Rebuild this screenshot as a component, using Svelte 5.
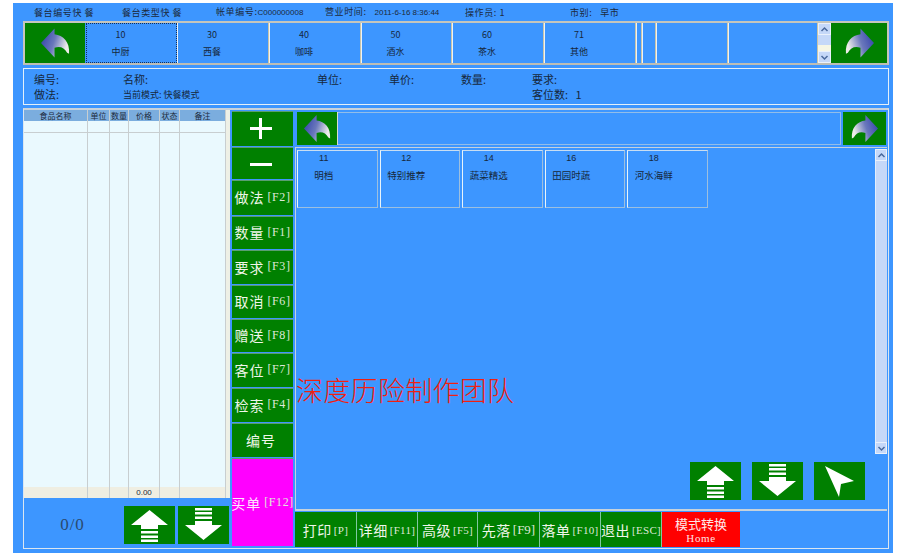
<script>
    const tabs = [
        { code: "10", name: "中厨", w: 91, focus: true },
        { code: "30", name: "西餐", w: 92 },
        { code: "40", name: "咖啡", w: 92 },
        { code: "50", name: "酒水", w: 91 },
        { code: "60", name: "茶水", w: 92 },
        { code: "71", name: "其他", w: 92 },
        { code: "", name: "", w: 6 },
        { code: "", name: "", w: 14 },
        { code: "", name: "", w: 72 },
        { code: "", name: "", w: 90 },
    ];
    const headers = [
        { t: "食品名称", w: 64 },
        { t: "单位", w: 22 },
        { t: "数量", w: 19 },
        { t: "价格", w: 31 },
        { t: "状态", w: 20 },
        { t: "备注", w: 46 },
    ];
    const cats = [
        { code: "11", name: "明档" },
        { code: "12", name: "特别推荐" },
        { code: "14", name: "蔬菜精选" },
        { code: "16", name: "田园时蔬" },
        { code: "18", name: "河水海鲜" },
    ];
    const side = [
        { t: "做法", k: "[F2]", h: 35 },
        { t: "数量", k: "[F1]", h: 33 },
        { t: "要求", k: "[F3]", h: 34 },
        { t: "取消", k: "[F6]", h: 33 },
        { t: "赠送", k: "[F8]", h: 33 },
        { t: "客位", k: "[F7]", h: 34 },
        { t: "检索", k: "[F4]", h: 34 },
        { t: "编号", k: "", h: 34 },
    ];
    const bottom = [
        { t: "打印", k: "[P]", w: 62 },
        { t: "详细", k: "[F11]", w: 61 },
        { t: "高级", k: "[F5]", w: 60 },
        { t: "先落", k: "[F9]", w: 62, big: true },
        { t: "落单", k: "[F10]", w: 61 },
        { t: "退出", k: "[ESC]", w: 61 },
    ];
</script>

{#snippet curved(cls)}
    <svg class={cls} viewBox="0 0 30 30">
        <defs>
            <linearGradient id="arrowfill" x1="0" y1="0" x2="1" y2="0.35">
                <stop offset="0" stop-color="#2a3aa6" />
                <stop offset="0.55" stop-color="#6a78bc" />
                <stop offset="1" stop-color="#ecece8" />
            </linearGradient>
        </defs>
        <path d="M0 15 L14 0 L14 6 C23 7 30 14 29 26 L27 25 C24 20 20 18 14 20 L14 30 Z" fill="url(#arrowfill)" />
    </svg>
{/snippet}

{#snippet chevron(up)}
    <div class="sb-btn">
        <svg viewBox="0 0 9 9" width="9" height="9">
            <path d={up ? "M1.500 6 L4.500 3 L7.500 6" : "M1.500 3 L4.500 6 L7.500 3"} fill="none" stroke="#4a6a9c" stroke-width="1.500" />
        </svg>
    </div>
{/snippet}

{#snippet upArrow()}
    <svg class="block" viewBox="0 0 51 38">
        <path d="M25.500 4 L44 19 L34 19 L34 23 L17 23 L17 19 L7 19 Z M17 25 H34 V27.500 H17 Z M17 29.500 H34 V32 H17 Z M17 33.500 H34 V36 H17 Z" fill="#fff" />
    </svg>
{/snippet}

{#snippet downArrow()}
    <svg class="block" viewBox="0 0 51 38">
        <path d="M25.500 34 L44 19 L34 19 L34 15 L17 15 L17 19 L7 19 Z M17 13 H34 V10.500 H17 Z M17 8.500 H34 V6 H17 Z M17 4.500 H34 V2 H17 Z" fill="#fff" />
    </svg>
{/snippet}

<div class="page">
    <div class="window">
        <div class="status">
            <span>餐台编号快 餐</span>
            <span>餐台类型快 餐</span>
            <span>帐单编号:<i>C000000008</i></span>
            <span class="open">营业时间:<i>2011-6-16 8:36:44</i></span>
            <span>操作员: 1</span>
            <span>市别: &nbsp;&nbsp;早市</span>
        </div>

        <div class="tabs">
            <button class="green nav-l">{@render curved("curve")}</button>
            {#each tabs as tab}
                <div class="tab" class:focus={tab.focus} class:labelled={tab.code} style="width:{tab.w}px">
                    <span>{tab.code}</span>
                    <span>{tab.name}</span>
                </div>
            {/each}
            <div class="tab-scroll">
                {@render chevron(true)}
                <div class="sb-thumb"></div>
                <div class="sb-track"></div>
                {@render chevron(false)}
            </div>
            <button class="green nav-r">{@render curved("curve flip")}</button>
        </div>

        <div class="info">
            <span>编号:</span><span>名称:</span><span>单位:</span><span>单价:</span><span>数量:</span><span>要求:</span>
            <span>做法:</span><span class="mode">当前模式: 快餐模式</span><span></span><span></span><span></span><span>客位数: &nbsp;&nbsp;1</span>
        </div>

        <div class="main">
            <div class="left">
                <div class="table">
                    <div class="row head">
                        {#each headers as h}<div style="width:{h.w}px">{h.t}</div>{/each}
                    </div>
                    <div class="row first">
                        {#each headers as h}<div style="width:{h.w}px"></div>{/each}
                    </div>
                    <div class="row fill">
                        {#each headers as h}<div style="width:{h.w}px"></div>{/each}
                    </div>
                    <div class="row total">
                        {#each headers as h, i}<div style="width:{h.w}px">{i === 3 ? "0.00" : ""}</div>{/each}
                    </div>
                </div>
                <div class="pager">
                    <span class="count">0/0</span>
                    <button class="green big">{@render upArrow()}</button>
                    <button class="green big">{@render downArrow()}</button>
                </div>
            </div>

            <div class="side">
                <button class="green sbtn plus"><span class="bar-h"></span><span class="bar-v"></span></button>
                <button class="green sbtn minus"><span class="bar-h"></span></button>
                {#each side as s}
                    <button class="green sbtn" style="height:{s.h}px">{s.t}<small>{s.k}</small></button>
                {/each}
                <button class="sbtn pay">买单<small>[F12]</small></button>
            </div>

            <div class="right">
                <div class="subnav">
                    <button class="green sub-l">{@render curved("curve small")}</button>
                    <div class="sub-fill"></div>
                    <button class="green sub-r">{@render curved("curve small flip")}</button>
                </div>
                <div class="board">
                    <div class="cells">
                        {#each cats as c}
                            <div class="cell">
                                <span class="code">{c.code}</span>
                                <span class="name">{c.name}</span>
                            </div>
                        {/each}
                    </div>
                    <div class="scroll">
                        {@render chevron(true)}
                        <div class="scroll-thumb"></div>
                        {@render chevron(false)}
                    </div>
                    <div class="actions">
                        <button class="green big">{@render upArrow()}</button>
                        <button class="green big">{@render downArrow()}</button>
                        <button class="green big">
                            <svg class="block" viewBox="0 0 51 38">
                                <path d="M11 4 L40 19 L27 22 L25 35 Z" fill="#fff" />
                            </svg>
                        </button>
                    </div>
                    <div class="watermark">深度历险制作团队</div>
                </div>
                <div class="bottom">
                    {#each bottom as b}
                        <button class="green bbtn" class:wide={b.big} style="width:{b.w}px">{b.t}<small>{b.k}</small></button>
                    {/each}
                    <button class="switch">模式转换<small>Home</small></button>
                </div>
            </div>
        </div>
    </div>
</div>

<style>
    :global(body) {
        margin: 0;
        background: #fff;
    }
    .page {
        width: 900px;
        height: 559px;
        padding: 3px 0 0 13px;
        box-sizing: border-box;
        font-family: "Noto Sans CJK SC", "Liberation Sans", sans-serif;
        color: #16283c;
    }
    .window {
        width: 880px;
        height: 550px;
        background: #3d96ff;
        box-sizing: border-box;
        padding-left: 10px;
        overflow: hidden;
    }
    button {
        border: 0;
        padding: 0;
        margin: 0;
        font: inherit;
    }
    .green {
        background: #008000;
    }
    .status {
        height: 18px;
        display: grid;
        grid-template-columns: 88px 94px 109px 140px 105px 1fr;
        padding-left: 11px;
        align-items: center;
        font-size: 9px;
        letter-spacing: 0.6px;
        line-height: 18px;
        white-space: nowrap;
        color: #1c2a3c;
    }
    .status i {
        font-style: normal;
        font-size: 8px;
        letter-spacing: 0;
        font-family: "Liberation Sans", sans-serif;
    }
    .open i {
        margin-left: 8px;
    }
    .tabs {
        width: 866px;
        height: 44px;
        display: flex;
        box-sizing: border-box;
        border: 2px solid #c6c6bc;
        border-bottom-color: #bdbdb4;
    }
    .nav-l {
        width: 60px;
        height: 40px;
        flex: none;
        margin-right: 1px;
        display: flex;
        align-items: center;
        justify-content: center;
    }
    .nav-r {
        width: 56px;
        height: 40px;
        flex: none;
        display: flex;
        align-items: center;
        justify-content: center;
    }
    .curve {
        width: 29px;
        height: 30px;
        display: block;
    }
    .flip {
        transform: scaleX(-1);
    }
    .small {
        width: 27px;
        height: 27px;
    }
    .tab {
        box-sizing: border-box;
        flex: none;
        height: 40px;
        border-left: 1px solid #eef3f6;
        border-right: 1px solid #c9c4a8;
        display: flex;
        flex-direction: column;
        align-items: center;
        justify-content: center;
        gap: 4px;
        font-size: 9px;
        line-height: 13px;
    }
    .labelled {
        padding-right: 22px;
    }
    .focus {
        border: 1px dotted #12305c;
    }
    .tab-scroll {
        width: 13px;
        height: 40px;
        flex: none;
        display: flex;
        flex-direction: column;
        background: #f6f6e4;
    }
    .sb-btn {
        height: 12px;
        flex: none;
        background: #c5d8f8;
        border: 1px solid #eaf1fb;
        box-sizing: border-box;
        display: flex;
        align-items: center;
        justify-content: center;
        overflow: hidden;
    }
    .sb-thumb {
        height: 10px;
        background: #c5d8f8;
    }
    .sb-track {
        flex: 1;
    }
    .info {
        width: 866px;
        height: 37px;
        margin-top: 3px;
        box-sizing: border-box;
        border: 1px solid #e4f0fa;
        display: grid;
        grid-template-columns: 89px 194px 72px 72px 71px 1fr;
        grid-template-rows: 15px 15px;
        padding: 3px 0 0 10px;
        font-size: 11px;
        line-height: 15px;
        white-space: nowrap;
    }
    .mode {
        font-size: 9px;
    }
    .main {
        width: 866px;
        height: 441px;
        margin-top: 3px;
        box-sizing: border-box;
        border: 1px solid #dbe6f0;
        border-top: 2px solid #c9d3dc;
        display: flex;
    }
    .left {
        width: 206px;
        display: flex;
        flex-direction: column;
    }
    .table {
        width: 206px;
        height: 388px;
        box-sizing: border-box;
        border-right: 4px solid #eef0e6;
        display: flex;
        flex-direction: column;
        background: #eaf9fe;
    }
    .row {
        display: flex;
        font-size: 8px;
        text-align: center;
        color: #1c2a3c;
    }
    .row div {
        box-sizing: border-box;
        border-right: 1px solid #c8ced0;
    }
    .head {
        height: 11px;
        line-height: 11px;
        background: #7badde;
        white-space: nowrap;
    }
    .first {
        height: 11px;
        border-bottom: 1px solid #c8ced0;
    }
    .fill {
        flex: 1;
    }
    .total {
        height: 11px;
        line-height: 11px;
        background: #efeee2;
        font-family: "Liberation Sans", sans-serif;
    }
    .pager {
        flex: 1;
        display: flex;
        align-items: center;
        gap: 3px;
        padding-top: 3px;
    }
    .count {
        width: 97px;
        text-align: center;
        font: 17px "Liberation Serif", serif;
        letter-spacing: 1px;
        color: #2a4a70;
    }
    .big {
        width: 51px;
        height: 38px;
        flex: none;
    }
    .block {
        display: block;
        width: 51px;
        height: 38px;
    }
    .side {
        width: 61px;
        margin: 1px 2px 0;
        display: flex;
        flex-direction: column;
        gap: 1px;
    }
    .sbtn {
        width: 61px;
        box-sizing: border-box;
        color: #f0f6ea;
        font-size: 14px;
        white-space: nowrap;
        letter-spacing: 1px;
        border-top: 1px solid #5a9e70;
        padding-bottom: 2px;
        overflow: hidden;
        display: flex;
        align-items: center;
        justify-content: center;
    }
    small {
        font: 12px "Liberation Serif", serif;
        letter-spacing: 0.6px;
        margin-left: 3px;
        color: #dfe8d8;
    }
    .plus {
        height: 35px;
        position: relative;
    }
    .minus {
        height: 32px;
        position: relative;
    }
    .bar-h {
        position: absolute;
        left: 18px;
        top: 15px;
        width: 22px;
        height: 3px;
        background: #fff;
    }
    .bar-v {
        position: absolute;
        left: 27px;
        top: 6px;
        width: 3px;
        height: 21px;
        background: #fff;
    }
    .pay {
        height: 88px;
        padding-bottom: 0;
        background: #ff00ff;
        color: #ffe6ff;
    }
    .right {
        flex: 1;
        min-width: 0;
        display: flex;
        flex-direction: column;
    }
    .subnav {
        height: 37px;
        display: flex;
        box-sizing: border-box;
        padding: 2px 1px 2px 2px;
    }
    .sub-l {
        width: 41px;
        height: 33px;
        display: flex;
        align-items: center;
        justify-content: center;
        border-right: 1px solid #d8dccf;
    }
    .sub-fill {
        flex: 1;
        height: 33px;
        box-sizing: border-box;
        border-top: 1px solid #93bde8;
        border-bottom: 1px solid #93bde8;
        border-right: 1px solid #93bde8;
    }
    .sub-r {
        width: 43px;
        height: 33px;
        margin: 0 1px 0 2px;
        display: flex;
        align-items: center;
        justify-content: center;
    }
    .board {
        position: relative;
        height: 364px;
        box-sizing: border-box;
        border: 1px solid #c6d2dc;
        border-width: 1px 0 2px 1px;
        margin-right: 1px;
    }
    .cells {
        display: flex;
        gap: 2px;
        padding: 2px 0 0 1px;
    }
    .cell {
        width: 80.500px;
        height: 58px;
        box-sizing: border-box;
        border: 1px solid #9dbfdf;
        border-top-color: #c9def2;
        border-left-color: #e8f4fb;
        font-size: 9.500px;
        line-height: 13px;
        padding: 1px 27px 0 0;
        text-align: center;
        white-space: nowrap;
        display: flex;
        flex-direction: column;
    }
    .code {
        font-size: 9px;
        font-family: "Liberation Sans", sans-serif;
    }
    .name {
        padding-top: 4px;
    }
    .scroll {
        position: absolute;
        right: 0;
        top: 1px;
        width: 12px;
        height: 305px;
        display: flex;
        flex-direction: column;
    }
    .scroll-thumb {
        flex: 1;
        background: #c5d8f8;
        border-left: 1px solid #e4eefb;
    }
    .actions {
        position: absolute;
        right: 22px;
        top: 314px;
        display: flex;
        gap: 11px;
    }
    .watermark {
        position: absolute;
        left: 0;
        top: 224px;
        font-size: 27px;
        letter-spacing: 0.3px;
        line-height: 36px;
        font-weight: 300;
        color: #f02010;
        white-space: nowrap;
    }
    .bottom {
        display: flex;
        padding-top: 1px;
    }
    .bbtn {
        height: 35px;
        box-sizing: border-box;
        color: #f0f6ea;
        font-size: 14px;
        white-space: nowrap;
        border-right: 1px solid #7fc8a0;
        overflow: hidden;
        display: flex;
        align-items: center;
        justify-content: center;
        letter-spacing: 0.5px;
    }
    .bbtn small {
        margin-left: 2px;
        font-size: 11px;
        letter-spacing: 0.3px;
    }
    .bbtn.wide small {
        font-size: 13px;
        letter-spacing: 0;
    }
    .switch {
        width: 78px;
        height: 35px;
        background: #ff0000;
        color: #ffe8e8;
        font-size: 13px;
        line-height: 16px;
        display: flex;
        flex-direction: column;
        align-items: center;
        justify-content: center;
    }
    .switch small {
        margin: 0;
        font-size: 11px;
        line-height: 12px;
        color: #ffe0e0;
    }
</style>
